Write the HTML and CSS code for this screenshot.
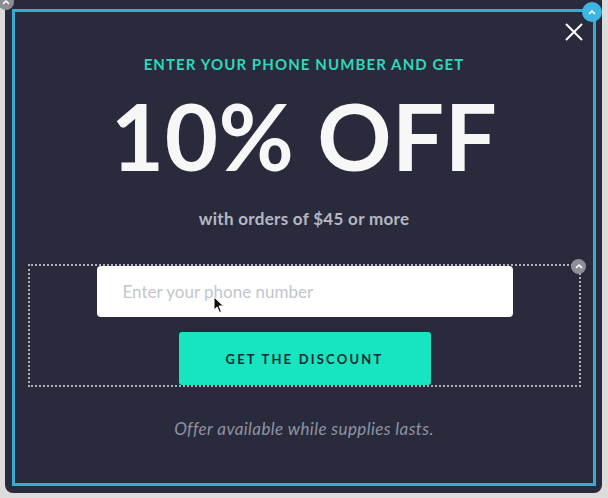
FILE: index.html
```html
<!DOCTYPE html>
<html>
<head>
   <title>Phone Popup</title>
   <meta name="viewport" content="width=device-width, initial-scale=1">
   <link rel="stylesheet" href="styles.css">
</head>
<body>
   <div class="frame">
      <!-- editor handles -->
      <span class="handle handle-left">
         <svg width="8" height="5" viewBox="0 0 8 5"><path d="M1 4 L4 1 L7 4" fill="none" stroke="#fff" stroke-width="1.5"/></svg>
      </span>
      <span class="handle handle-right">
         <svg width="8" height="5" viewBox="0 0 8 5"><path d="M1 4 L4 1 L7 4" fill="none" stroke="#fff" stroke-width="1.5"/></svg>
      </span>

      <div class="popup">
         <button class="close" aria-label="Close">
            <svg width="18" height="18" viewBox="0 0 18 18"><path d="M1 1 L17 17 M17 1 L1 17" stroke="#fff" stroke-width="2"/></svg>
         </button>

         <p class="kicker">ENTER YOUR PHONE NUMBER AND GET</p>
         <h1 class="headline">10% OFF</h1>
         <p class="sub">with orders of $45 or more</p>

         <form class="form-box">
            <span class="handle handle-box">
               <svg width="8" height="5" viewBox="0 0 8 5"><path d="M1 4 L4 1 L7 4" fill="none" stroke="#fff" stroke-width="1.5"/></svg>
            </span>
            <input class="phone" type="tel" placeholder="Enter your phone number">
            <button class="cta" type="button">GET THE DISCOUNT</button>
         </form>

         <p class="note">Offer available while supplies lasts.</p>
      </div>

      <!-- mouse pointer from the capture -->
      <svg class="cursor" width="12" height="18" viewBox="0 0 12 18">
         <path d="M1 1 L1 14 L4 11 L6.5 16.5 L8.5 15.5 L6 10 L10.5 10 Z" fill="#111" stroke="#fff" stroke-width="1"/>
      </svg>
   </div>
</body>
</html>
```

FILE: styles.css
```css
body {
   margin: 0;
   background: #dcdcdc;
   font-family: Lato, "Open Sans", sans-serif;
}
.frame {
   position: relative;
   margin-left: 5px;
   width: 597px;
   height: 493px;
   padding-top: 9px;
   box-sizing: border-box;
   background: #292b3d;
   border-radius: 0 0 8px 8px;
}
.popup {
   position: relative;
   margin-left: 7px;
   width: 584px;
   height: 477px;
   box-sizing: border-box;
   border: 3px solid #3aaad4;
   display: flex;
   flex-direction: column;
   align-items: center;
   text-align: center;
}
.close {
   position: absolute;
   top: 11px;
   right: 10px;
   width: 18px;
   height: 18px;
   padding: 0;
   border: none;
   background: none;
   line-height: 0;
   cursor: pointer;
}
.kicker {
   margin: 42px 0 0;
   font-size: 15px;
   line-height: 20px;
   font-weight: 700;
   letter-spacing: 1.1px;
   color: #2fd8b8;
}
.headline {
   margin: 16px 0 0;
   font-size: 92px;
   line-height: 92px;
   font-weight: 700;
   letter-spacing: 0.5px;
   color: #f7f7f7;
}
.sub {
   margin: 26px 0 0;
   font-size: 17px;
   line-height: 22px;
   font-weight: 700;
   letter-spacing: 0.3px;
   color: #b5b7c3;
}
.form-box {
   position: relative;
   margin: 34px 0 0 1px;
   width: 553px;
   box-sizing: border-box;
   border: 2px dotted #aeb1ba;
   display: flex;
   flex-direction: column;
   align-items: center;
   gap: 15px;
}
.phone {
   width: 416px;
   height: 51px;
   box-sizing: border-box;
   padding: 0 0 0 26px;
   border: none;
   border-radius: 4px;
   background: #fff;
   font-family: Lato, sans-serif;
   font-size: 17px;
   color: #333;
   outline: none;
}
.phone::placeholder {
   color: #c3c5cf;
}
.cta {
   width: 252px;
   height: 53px;
   border: none;
   border-radius: 3px;
   background: #17e5bf;
   color: #1d2b35;
   font-family: Lato, sans-serif;
   font-size: 13px;
   font-weight: 700;
   letter-spacing: 2.2px;
   cursor: pointer;
}
.note {
   margin: 32px 0 0;
   font-size: 17px;
   line-height: 20px;
   font-style: italic;
   letter-spacing: 0.4px;
   color: #8f92a2;
}
.handle {
   position: absolute;
   display: flex;
   align-items: center;
   justify-content: center;
   border-radius: 50%;
}
.handle-left {
   left: -7px;
   top: -6px;
   width: 16px;
   height: 16px;
   background: #8c8d94;
}
.handle-right {
   right: 0;
   top: 2px;
   width: 20px;
   height: 20px;
   background: #3db6e2;
   z-index: 2;
}
.handle-box {
   right: -7px;
   top: -7px;
   width: 15px;
   height: 15px;
   background: #8e9099;
}
.cursor {
   position: absolute;
   left: 208px;
   top: 296px;
}
```
